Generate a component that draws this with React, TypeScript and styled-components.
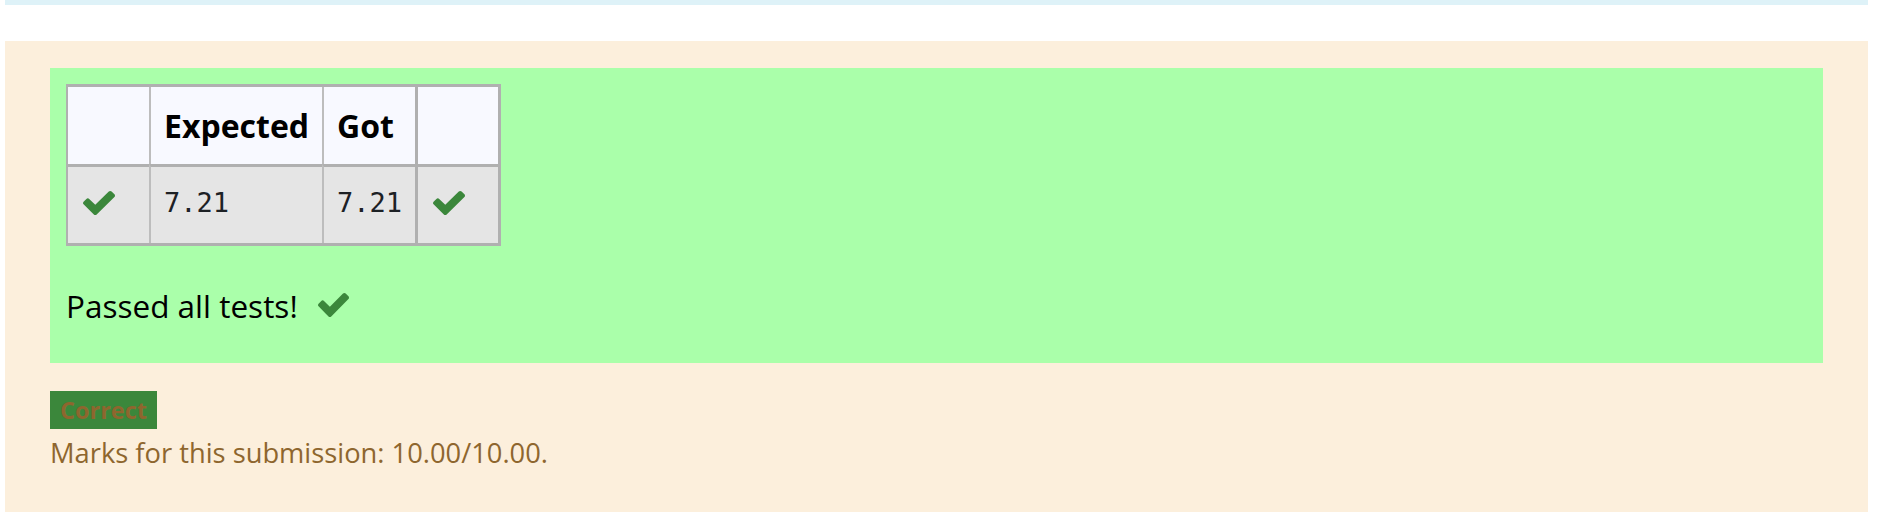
import React from "react";
import styled, { createGlobalStyle } from "styled-components";

const GlobalStyle = createGlobalStyle`
  html, body {
    margin: 0;
    padding: 0;
    background: #ffffff;
  }
  body {
    font-family: "Open Sans", "Noto Sans", sans-serif;
    color: #000000;
  }
`;

const Page = styled.div`
  padding: 0 16px 0 5px;
`;

const InfoBar = styled.div`
  height: 5px;
  background: #def2f8;
  margin-bottom: 36px;
`;

const Outcome = styled.div`
  background: #fcefdc;
  color: #8e662e;
  padding: 27px 45px 80px;
`;

const Feedback = styled.div`
  background: #aaffaa;
  padding: 16px 16px 33px;
`;

const ResultsTable = styled.table`
  border-collapse: separate;
  border-spacing: 0;
  border-style: solid;
  border-color: #b0b0b0;
  border-width: 3px 3px 3px 2px;
  color: #000000;
`;

const HeadCell = styled.th<{ $w: number; $sep: number }>`
  box-sizing: content-box;
  width: ${(p) => p.$w - 13}px;
  height: 77px;
  padding: 0 0 0 13px;
  background: #f8f9ff;
  border-left: ${(p) => p.$sep}px solid ${(p) => (p.$sep > 2 ? "#b0b0b0" : "#bdbdbd")};
  font-weight: 700;
  font-size: 32px;
  line-height: 77px;
  text-align: left;
  vertical-align: middle;
  white-space: nowrap;
`;

const BodyCell = styled.td<{ $w: number; $sep: number }>`
  box-sizing: content-box;
  width: ${(p) => p.$w - 13}px;
  height: 72px;
  padding: 0 0 4px 13px;
  background: #e5e5e5;
  border-top: 3px solid #b0b0b0;
  border-left: ${(p) => p.$sep}px solid ${(p) => (p.$sep > 2 ? "#b0b0b0" : "#bdbdbd")};
  font-family: "DejaVu Sans Mono", "Liberation Mono", monospace;
  font-size: 27px;
  line-height: 72px;
  color: #1d2125;
  vertical-align: middle;
  white-space: nowrap;
`;

const IconCell = styled(BodyCell)`
  width: ${(p) => p.$w - 15}px;
  padding-left: 15px;
`;

const CheckSvg = styled.svg<{ $block?: boolean }>`
  display: ${(p) => (p.$block ? "block" : "inline-block")};
  fill: #3b873b;
`;

const Summary = styled.div`
  margin-top: 36px;
  font-size: 31.5px;
  line-height: 48px;
  display: flex;
  align-items: center;
  color: #000000;
`;

const SummaryIcon = styled.span`
  display: inline-flex;
  margin-left: 20px;
  margin-top: -2px;
`;

const Badge = styled.span`
  display: inline-block;
  margin-top: 28px;
  background: #3b873b;
  color: #8e662e;
  font-weight: 700;
  font-size: 23.5px;
  line-height: 38px;
  padding: 0 10px;
`;

const Marks = styled.div`
  font-size: 27.3px;
  line-height: 42px;
  margin-top: 3px;
`;

const Check: React.FC<{ w: number; h: number; block?: boolean }> = ({ w, h, block }) => (
  <CheckSvg $block={block} width={w} height={h} viewBox="121 334 1550 1188" preserveAspectRatio="none">
    <path d="M1671 566q0 40-28 68l-724 724-136 136q-28 28-68 28t-68-28l-136-136-362-362q-28-28-28-68t28-68l136-136q28-28 68-28t68 28l294 295 656-657q28-28 68-28t68 28l136 136q28 28 28 68z" />
  </CheckSvg>
);

export default function App() {
  return (
    <>
      <GlobalStyle />
      <Page>
        <InfoBar />
        <Outcome>
          <Feedback>
            <ResultsTable>
              <thead>
                <tr>
                  <HeadCell $w={81} $sep={0}></HeadCell>
                  <HeadCell $w={171} $sep={2}>Expected</HeadCell>
                  <HeadCell $w={91} $sep={2}>Got</HeadCell>
                  <HeadCell $w={80} $sep={3}></HeadCell>
                </tr>
              </thead>
              <tbody>
                <tr>
                  <IconCell $w={81} $sep={0}>
                    <Check w={32} h={24} block />
                  </IconCell>
                  <BodyCell $w={171} $sep={2}>7.21</BodyCell>
                  <BodyCell $w={91} $sep={2}>7.21</BodyCell>
                  <IconCell $w={80} $sep={3}>
                    <Check w={32} h={24} block />
                  </IconCell>
                </tr>
              </tbody>
            </ResultsTable>
            <Summary>
              Passed all tests!
              <SummaryIcon>
                <Check w={31} h={24} />
              </SummaryIcon>
            </Summary>
          </Feedback>
          <Badge>Correct</Badge>
          <Marks>Marks for this submission: 10.00/10.00.</Marks>
        </Outcome>
      </Page>
    </>
  );
}
